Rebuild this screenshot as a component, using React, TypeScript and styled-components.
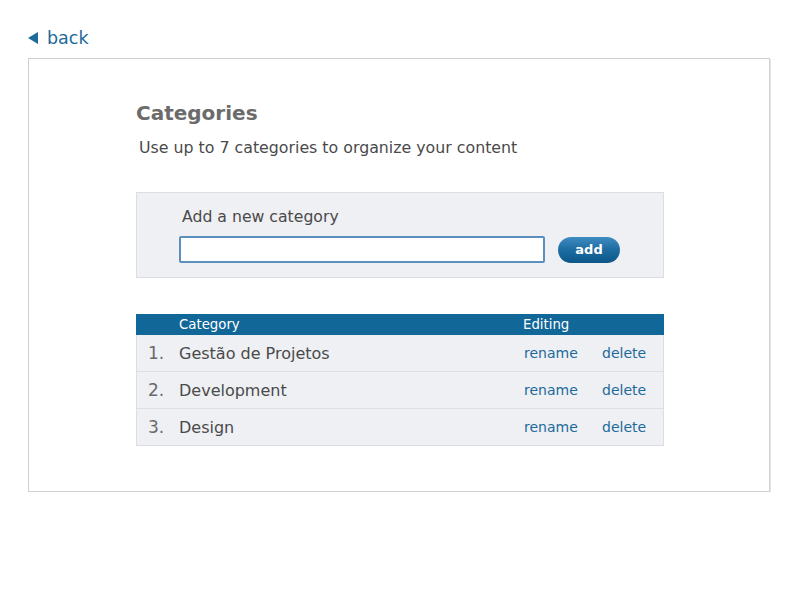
import React from "react";
import styled, { createGlobalStyle } from "styled-components";

const GlobalStyle = createGlobalStyle`
  body {
    margin: 0;
    background: #ffffff;
    font-family: "DejaVu Sans", Verdana, sans-serif;
  }
`

const Page = styled.div`
  padding: 27px 0 0 28px;
`

const BackLink = styled.a`
  display: inline-flex;
  align-items: center;
  gap: 9px;
  height: 22px;
  font-size: 17.5px;
  color: #1d6a9b;
  text-decoration: none;
  cursor: pointer;
`

const Panel = styled.div`
  box-sizing: border-box;
  width: 742px;
  height: 434px;
  margin-top: 9px;
  padding: 40px 0 0 107px;
  border: 1px solid #d0d0d0;
  box-shadow: 1px 1px 0 #e6e6e6;
  background: #ffffff;
`

const Content = styled.div`
  width: 528px;
`

const Title = styled.h1`
  margin: 0;
  font-size: 20px;
  line-height: 28px;
  font-weight: bold;
  color: #6b6b6b;
`

const Subtitle = styled.p`
  margin: 11px 0 0 3px;
  font-size: 15.8px;
  line-height: 20px;
  color: #4a4a4a;
`

const AddBox = styled.div`
  box-sizing: border-box;
  height: 86px;
  margin-top: 34px;
  padding: 14px 0 0 42px;
  background: #eff0f4;
  border: 1px solid #dcdde2;
`

const AddLabel = styled.div`
  margin-left: 3px;
  font-size: 15.7px;
  line-height: 20px;
  color: #4a4a4a;
`

const AddRow = styled.div`
  display: flex;
  align-items: center;
  gap: 13px;
  margin-top: 9px;
`

const TextInput = styled.input`
  box-sizing: border-box;
  width: 366px;
  height: 27px;
  padding: 0 8px;
  border: 2px solid #5b8fbd;
  border-radius: 2px;
  background: #ffffff;
  font-family: inherit;
  font-size: 14px;
  outline: none;
`

const AddButton = styled.button`
  width: 62px;
  height: 26px;
  border: none;
  border-radius: 13px;
  background: linear-gradient(#3f8cc2 0%, #1e6ea4 45%, #0d5688 100%);
  color: #ffffff;
  font-family: inherit;
  font-weight: bold;
  font-size: 13px;
  cursor: pointer;
`

const Table = styled.div`
  margin-top: 36px;
  border: 1px solid #dcdde2;
  border-top: none;
`

const HeaderRow = styled.div`
  display: grid;
  grid-template-columns: 43px 1fr 140px;
  height: 21px;
  align-items: center;
  background: #126799;
  color: #ffffff;
  font-size: 13.3px;
  margin: 0 -1px;
`

const HeaderCell = styled.div<{ $shift?: number }>`
  margin-left: ${(p) => p.$shift ?? 0}px;
`

const Row = styled.div`
  display: grid;
  grid-template-columns: 42px 1fr 78px 61px;
  height: 36px;
  align-items: center;
  background: #eff0f4;
  & + & {
    border-top: 1px solid #dedfe5;
  }
`

const Num = styled.span`
  padding-left: 11px;
  font-size: 17px;
  color: #6a6a6a;
`

const Name = styled.span`
  font-size: 16px;
  color: #4a4a4a;
`

const Action = styled.a`
  font-size: 14px;
  color: #1d6a9b;
  cursor: pointer;
`

const categories = ["Gestão de Projetos", "Development", "Design"]

function Triangle() {
  return (
    <svg width="10" height="12" viewBox="0 0 10 12">
      <path d="M10 0 L10 12 L0 6 Z" fill="#1d6a9b" />
    </svg>
  )
}

export default function App() {
  return (
    <>
      <GlobalStyle />
      <Page>
        <BackLink>
          <Triangle />
          back
        </BackLink>
        <Panel>
          <Content>
            <Title>Categories</Title>
            <Subtitle>Use up to 7 categories to organize your content</Subtitle>
            <AddBox>
              <AddLabel>Add a new category</AddLabel>
              <AddRow>
                <TextInput />
                <AddButton>add</AddButton>
              </AddRow>
            </AddBox>
            <Table>
              <HeaderRow>
                <span />
                <HeaderCell>Category</HeaderCell>
                <HeaderCell $shift={-1}>Editing</HeaderCell>
              </HeaderRow>
              {categories.map((name, i) => (
                <Row key={name}>
                  <Num>{i + 1}.</Num>
                  <Name>{name}</Name>
                  <Action>rename</Action>
                  <Action>delete</Action>
                </Row>
              ))}
            </Table>
          </Content>
        </Panel>
      </Page>
    </>
  )
}
